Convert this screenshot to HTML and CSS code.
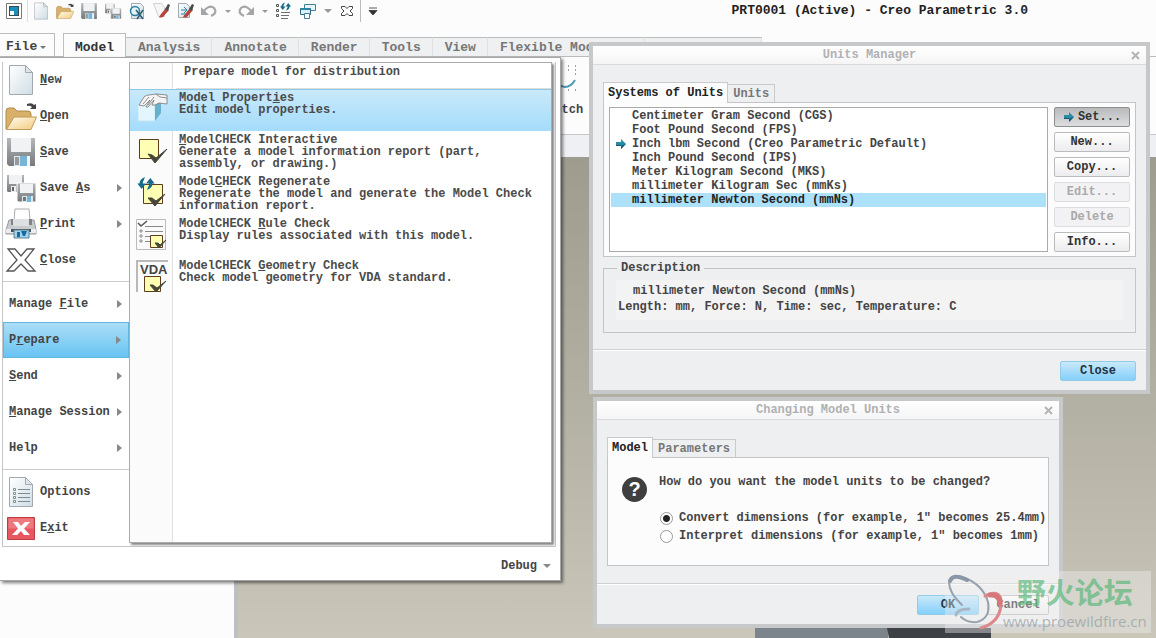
FILE: index.html
```html
<!DOCTYPE html>
<html lang="en">
<head>
  <meta charset="UTF-8">
  <meta name="viewport" content="width=device-width, initial-scale=1.0">
  <title>PRT0001 (Active) - Creo Parametric 3.0</title>
  <link rel="stylesheet" href="styles.css">
</head>
<body>
  <!-- shared icon shapes -->
  <svg class="defs" width="0" height="0" aria-hidden="true">
    <defs>
      <linearGradient id="paper" x1="0" y1="0" x2="1" y2="1"><stop offset="0" stop-color="#fff"/><stop offset="1" stop-color="#cfdde6"/></linearGradient>
      <linearGradient id="gold" x1="0" y1="0" x2="1" y2="1"><stop offset="0" stop-color="#fffdf0"/><stop offset="1" stop-color="#f3c97c"/></linearGradient>
      <linearGradient id="steel" x1="0" y1="0" x2="0" y2="1"><stop offset="0" stop-color="#b4b8bb"/><stop offset="1" stop-color="#77797b"/></linearGradient>
    </defs>
    <symbol id="page" viewBox="0 0 32 32"><path d="M4.500 1.500h16l7 7v22h-23z" fill="url(#paper)" stroke="#a3aaaf"/><path d="M20.500 1.500v7h7z" fill="#dfe6ea" stroke="#a3aaaf"/></symbol>
    <symbol id="folder" viewBox="0 0 32 32"><path d="M1 29V11q0-3 3-3h5l3 3h11q3 0 3 3v6z" fill="#d9b06a" stroke="#b08a48"/><path d="M1.500 29.500L9 17h22.500L26 29.500z" fill="url(#gold)" stroke="#c09a58"/><path d="M22 4q5-2 7 1l2-1v5h-6l2-2q-2-2-5-1z" fill="#444"/></symbol>
    <symbol id="floppy" viewBox="0 0 32 32"><path d="M2 2h28v28H4l-2-2z" fill="url(#steel)"/><path d="M6 2h20v14H6z" fill="#f1f2f3"/><path d="M9 20h16v10H9z" fill="#d5e8f3"/><path d="M10 21h4v8h-4z" fill="#999"/><path d="M15 20h7v10h-7z" fill="#78b4d5"/><path d="M22 20h3v10h-3z" fill="#eef6fa"/></symbol>
    <symbol id="floppies" viewBox="0 0 32 32"><path d="M2 3h17v17H3l-1-1z" fill="url(#steel)"/><path d="M4 3h13v9H4z" fill="#f1f2f3"/><path d="M6 14h5v6H6z" fill="#eee"/><path d="M7 15h2v4H7z" fill="#666"/><path d="M12 11h19v19H13l-1-1z" fill="url(#steel)" stroke="#fff" stroke-width="1"/><path d="M15 12h13v9H15z" fill="#f1f2f3"/><path d="M17 24h11v6H17z" fill="#d5e8f3"/><path d="M18 25h3v4h-3z" fill="#777"/><path d="M22 24h4v6h-4z" fill="#78b4d5"/></symbol>
    <symbol id="note" viewBox="0 0 32 32"><path d="M3.500 5.500h19v19h-19z" fill="#ffffb4" stroke="#5c3d1e"/><path d="M12 20l4 1 4 3 11-9-12 14z" fill="#474739" stroke="#474739"/></symbol>
    <symbol id="arrow" viewBox="0 0 12 12"><path d="M1 4h5V1l5 5-5 5V8H1z" fill="#2b8aa5"/><path d="M1 7h5v4l5-5.500L6 8H1z" fill="#17576e"/></symbol>
    <symbol id="caret" viewBox="0 0 8 6"><path d="M0 1h8L4 5z" fill="currentColor"/></symbol>
    <symbol id="swap" viewBox="0 0 16 12"><path d="M0 6h2q0-4 5-6l-1 3q-1 1-1 3h3l-4 5zM16 6h-2q0 4-5 6l1-3q1-1 1-3H8l4-5z" fill="#176b8a"/></symbol>
    <symbol id="undo" viewBox="0 0 18 18"><path d="M3 10Q9 2 14 6q4 5-3 8" fill="none" stroke="#a3a5a7" stroke-width="2.200"/><path d="M1 5v8h8z" fill="#a3a5a7"/></symbol>
    <symbol id="brush" viewBox="0 0 18 18"><path d="M9 12l5-6 3 2-6 7q-3 1-4 0z" fill="#b4463c"/><path d="M13 7l3-5 2 1-2 6z" fill="#4c4c4c"/></symbol>
  </svg>

  <header class="titlebar">
    <div class="quick-tools">
      <button class="tool" aria-label="Window"><svg width="18" height="18" viewBox="0 0 18 18"><path d="M1.500 1.500h15v15h-15z" fill="#fff" stroke="#777"/><path d="M4 4h10v10H4z" fill="#37484f"/><path d="M5 5h8v8H5z" fill="#178fbd"/><path d="M5 9h4v4H5z" fill="#fff"/></svg></button>
      <span class="divider light"></span>
      <button class="tool" aria-label="New"><svg width="18" height="18"><use href="#page"/></svg></button>
      <button class="tool" aria-label="Open"><svg width="18" height="18"><use href="#folder"/></svg></button>
      <button class="tool" aria-label="Save"><svg width="18" height="18"><use href="#floppy"/></svg></button>
      <button class="tool" aria-label="Save all"><svg width="18" height="18"><use href="#floppies"/></svg></button>
      <button class="tool" aria-label="Preview"><svg width="18" height="18" viewBox="0 0 18 18"><path d="M3.500 1.500h9l3 3v12h-12z" fill="url(#paper)" stroke="#a3aaaf"/><circle cx="7" cy="9" r="4.500" fill="#e2f4fa" stroke="#267f9c" stroke-width="1.500"/><path d="M8 8l7 9M15 8l-6 9" stroke="#2d5c70" stroke-width="1.500"/></svg></button>
      <button class="tool" aria-label="Erase current"><svg width="18" height="18" viewBox="0 0 18 18"><path d="M1.500 1.500h8l3 4v9h-6z" fill="#f3f5f6" stroke="#cdd2d5"/><use href="#brush"/></svg></button>
      <button class="tool" aria-label="Erase not displayed"><svg width="18" height="18" viewBox="0 0 18 18"><path d="M2.500 1.500h8l3 3v11h-11z" fill="url(#paper)" stroke="#a3aaaf"/><path d="M5 8h5M5 12h4M8 5l3 3-3 3" stroke="#2687a7" fill="none"/><use href="#brush"/></svg></button>
      <button class="tool" aria-label="Undo"><svg width="18" height="18"><use href="#undo"/></svg></button>
      <button class="drop" aria-label="Undo list"><svg width="6" height="5"><use href="#caret"/></svg></button>
      <button class="tool" aria-label="Redo"><svg class="flip" width="18" height="18"><use href="#undo"/></svg></button>
      <button class="drop" aria-label="Redo list"><svg width="6" height="5"><use href="#caret"/></svg></button>
      <button class="tool" aria-label="Regenerate"><svg width="18" height="18" viewBox="0 0 18 18"><path d="M2.500 2.500h2v2h-2zM2.500 7.500h2v2h-2zM2.500 12.500h2v2h-2z" fill="#fff" stroke="#555"/><path d="M7 10.500h9M7 13.500h8M7 16.500h7" stroke="#6f6f6f"/><svg x="6" y="0" width="11" height="9"><use href="#swap"/></svg></svg></button>
      <button class="tool wide" aria-label="Windows"><svg width="18" height="18" viewBox="0 0 18 18"><path d="M5.500 2.500h11v6h-11z" fill="#e9f4f9" stroke="#477d95"/><path d="M1.500 6.500h10v6h-10z" fill="#dceff7" stroke="#2d6984"/><path d="M5.500 11.500h5v5h-5z" fill="#fff" stroke="#477d95"/><path d="M2 7h9" stroke="#2586a8" stroke-width="2"/></svg></button>
      <button class="drop" aria-label="Window list"><svg width="8" height="6"><use href="#caret"/></svg></button>
      <button class="tool wide" aria-label="Close window"><svg width="14" height="14" viewBox="0 0 14 14"><path d="M1.500 2.500h3.500l2 2 2-2h3.500v2L10 7l2.500 2.500v2H9l-2-2-2 2H1.500v-2L4 7 1.500 4.500z" fill="#fff" stroke="#444"/></svg></button>
      <span class="divider"></span>
      <button class="tool" aria-label="Customize"><svg width="10" height="9" viewBox="0 0 10 9"><path d="M1 1h8M1 3.500h8L5 8z" fill="#333" stroke="#333" stroke-width=".8"/></svg></button>
    </div>
    <h1 class="window-title">PRT0001 (Active) - Creo Parametric 3.0</h1>
  </header>

  <nav class="ribbon-tabs">
    <button class="file-tab">File<svg width="6" height="5"><use href="#caret"/></svg></button>
    <a class="tab current" href="#">Model</a>
    <a class="tab" href="#">Analysis</a>
    <a class="tab" href="#">Annotate</a>
    <a class="tab" href="#">Render</a>
    <a class="tab" href="#">Tools</a>
    <a class="tab" href="#">View</a>
    <a class="tab" href="#">Flexible Modeling</a>
    <a class="tab" href="#">Applications</a>
  </nav>

  <section class="ribbon">
    <button class="sketch">
      <svg width="40" height="30" viewBox="0 0 40 30"><path d="M12 10q3 12 11 12 6 0 10-7" fill="none" stroke="#4d9bb3" stroke-width="2"/><path d="M26 1h1M33 1h1M26 5h1M33 5h1M26 25h1M33 25h1M33 9h1" stroke="#444"/></svg>
      <span>Sketch</span>
    </button>
  </section>
  <div class="ribbon-labels"></div>

  <main class="workspace">
    <div class="tree"></div>
    <div class="canvas">
      <svg class="model" width="237" height="10"><path d="M0 0h133v10H0z" fill="#7c848c"/><path d="M132 0h104v10H134z" fill="#3e4246"/></svg>
    </div>
  </main>

  <!-- file menu -->
  <div class="file-menu">
    <div class="menu-panes">
      <div class="menu-list">
        <div class="menu-group">
          <button class="menu-item"><svg width="32" height="32"><use href="#page"/></svg><span><u>N</u>ew</span></button>
          <button class="menu-item"><svg width="32" height="32"><use href="#folder"/></svg><span><u>O</u>pen</span></button>
          <button class="menu-item"><svg width="32" height="32"><use href="#floppy"/></svg><span><u>S</u>ave</span></button>
          <button class="menu-item more"><svg width="32" height="32"><use href="#floppies"/></svg><span>Save <u>A</u>s</span></button>
          <button class="menu-item more"><svg width="32" height="32" viewBox="0 0 32 32"><path d="M9 12L10 1h14l1 11z" fill="#fff" stroke="#aaa"/><path d="M4 12h25l2 10v4H1v-4z" fill="#c9cccf" stroke="#96999c"/><path d="M6 11h21v6H6z" fill="#808386"/><path d="M8 11h16v7H8z" fill="#dde0e2"/><path d="M1 21h30v4H1z" fill="#e9ebec"/><path d="M6 21h20v3H6z" fill="#4c5156"/><path d="M9 22h15v8H9z" fill="#9dd4ef" stroke="#5f8292"/><path d="M12 24h3v5h-3zM16 23h6l-2 5h-2z" fill="#176a9b"/></svg><span><u>P</u>rint</span></button>
          <button class="menu-item"><svg width="32" height="32" viewBox="0 0 32 32"><path d="M3 5h7l6 7 6-7h7L20 16l10 11h-7l-7-7-7 7H2l10-11z" fill="#fff" stroke="#555" stroke-width="1.300"/></svg><span><u>C</u>lose</span></button>
        </div>
        <div class="menu-group">
          <button class="menu-item more"><span>Manage <u>F</u>ile</span></button>
          <button class="menu-item more active"><span>P<u>r</u>epare</span></button>
          <button class="menu-item more"><span><u>S</u>end</span></button>
          <button class="menu-item more"><span><u>M</u>anage Session</span></button>
          <button class="menu-item more"><span>Help</span></button>
        </div>
        <div class="menu-group">
          <button class="menu-item"><svg width="32" height="32" viewBox="0 0 32 32"><use href="#page"/><path d="M13 13.500h12M13 17.500h12M13 21.500h12M13 25.500h12" stroke="#7b8b93"/><path d="M8.500 12.500h2v2h-2zM8.500 16.500h2v2h-2zM8.500 20.500h2v2h-2zM8.500 24.500h2v2h-2z" fill="#fff" stroke="#65757d" stroke-width=".8"/></svg><span>Options</span></button>
          <button class="menu-item"><svg width="32" height="32" viewBox="0 0 32 32"><path d="M2.500 5.500h27v22h-27z" fill="#e85660" stroke="#bd3d43"/><path d="M3.500 6.500h25v10h-25z" fill="#ee7a80"/><path d="M8 10h5l3 4 4-4h5l-6 6.500 6 6.500h-6l-3-4-4 4H7l6-6.500z" fill="#fff"/></svg><span>E<u>x</u>it</span></button>
        </div>
      </div>

      <div class="submenu">
        <h2 class="submenu-title">Prepare model for distribution</h2>
        <button class="sub-item active">
          <svg width="32" height="32" viewBox="0 0 32 32"><path d="M2 13l5-5h17l-5 5z" fill="#fff"/><path d="M2 13h17v16H2z" fill="#e4f6fd" stroke="#c3e4f2"/><path d="M19 13l6-5v13l-6 8z" fill="#68b0cd"/><path d="M3 13l5-8q2-2 5-2l7-1 11 1v9l-8-1-4 2-3 0 2-5-6 7h-2l4-7-6 6z" fill="#f4f4f4" stroke="#777" stroke-width=".8"/><path d="M7 12l6-7M12 13l6-8M20 2l4 3 7 1" stroke="#777" stroke-width=".8" fill="none"/></svg>
          <span>Model Propert<u>i</u>es<br>Edit model properties.</span>
        </button>
        <button class="sub-item">
          <svg width="32" height="32"><use href="#note"/></svg>
          <span><u>M</u>odelCHECK Interactive<br>Generate a model information report (part, assembly, or drawing.)</span>
        </button>
        <button class="sub-item">
          <svg width="32" height="32" viewBox="0 0 32 32"><path d="M7.500 8.500h19v19h-19z" fill="#ffffb4" stroke="#5c3d1e"/><path d="M12 22l4 0 4 3 9-7-10 12z" fill="#474739" stroke="#474739"/><svg x="1" y="1" width="18" height="13"><use href="#swap"/></svg></svg>
          <span>Model<u>C</u>HECK Regenerate<br>Regenerate the model and generate the Model Check information report.</span>
        </button>
        <button class="sub-item">
          <svg width="32" height="32" viewBox="0 0 32 32"><path d="M.5 1.500h29v30H.5z" fill="#fafafa" stroke="#bbb"/><path d="M2 5l3 3 6-5" fill="none" stroke="#555" stroke-width="1.500"/><path d="M9 8.500h18M9 13.500h18M9 18.500h6M9 23.500h5" fill="none" stroke="#888"/><path d="M4 12h2v2H4zM4 17h2v2H4zM4 22h2v2H4z" fill="#fff" stroke="#777" stroke-width=".8"/><path d="M14.500 17.500h12v12h-12z" fill="#ffffb4" stroke="#5c3d1e"/><path d="M19 25l3 0 2 2 6-5-7 8z" fill="#474739" stroke="#474739"/></svg>
          <span>ModelCHECK <u>R</u>ule Check<br>Display rules associated with this model.</span>
        </button>
        <button class="sub-item">
          <svg width="32" height="32" viewBox="0 0 32 32"><path d="M1 32V1h31" fill="none" stroke="#b7b9bb" stroke-width="2"/><path d="M8.500 16.500h16v15h-16z" fill="#ffffb4" stroke="#5c3d1e"/><path d="M14 25l3 0 4 3 9-7-10 11z" fill="#474739" stroke="#474739"/><text class="icon-text" x="4" y="14">VDA</text></svg>
          <span>ModelCHECK <u>G</u>eometry Check<br>Check model geometry for VDA standard.</span>
        </button>
      </div>
    </div>
    <button class="debug">Debug<svg width="8" height="6"><use href="#caret"/></svg></button>
  </div>

  <!-- units manager -->
  <section class="dialog units-manager">
    <header class="dialog-title"><h2>Units Manager</h2><button class="dialog-x" aria-label="Close"><svg width="9" height="9" viewBox="0 0 9 9"><path d="M1 1l7 7M8 1L1 8" stroke="#b4b5b7" stroke-width="2"/></svg></button></header>
    <div class="dialog-body">
      <div class="dialog-tabs">
        <button class="dialog-tab current">Systems of Units</button>
        <button class="dialog-tab">Units</button>
      </div>
      <div class="tab-panel systems">
        <ul class="unit-list" role="listbox" aria-label="Systems of Units">
          <li role="option">Centimeter Gram Second (CGS)</li>
          <li role="option">Foot Pound Second (FPS)</li>
          <li role="option"><svg width="12" height="12"><use href="#arrow"/></svg>Inch lbm Second (Creo Parametric Default)</li>
          <li role="option">Inch Pound Second (IPS)</li>
          <li role="option">Meter Kilogram Second (MKS)</li>
          <li role="option">millimeter Kilogram Sec (mmKs)</li>
          <li role="option" class="selected" aria-selected="true">millimeter Newton Second (mmNs)</li>
        </ul>
        <div class="side-buttons">
          <button class="btn pressed"><svg width="12" height="12"><use href="#arrow"/></svg>Set...</button>
          <button class="btn">New...</button>
          <button class="btn">Copy...</button>
          <button class="btn" disabled>Edit...</button>
          <button class="btn" disabled>Delete</button>
          <button class="btn">Info...</button>
        </div>
      </div>
      <fieldset class="description">
        <legend>Description</legend>
        <div class="description-text">
          <p class="unit-name">millimeter Newton Second (mmNs)</p>
          <p>Length: mm, Force: N, Time: sec, Temperature: C</p>
        </div>
      </fieldset>
    </div>
    <footer class="dialog-footer"><button class="btn primary">Close</button></footer>
  </section>

  <!-- changing model units -->
  <section class="dialog change-units">
    <header class="dialog-title"><h2>Changing Model Units</h2><button class="dialog-x" aria-label="Close"><svg width="9" height="9" viewBox="0 0 9 9"><path d="M1 1l7 7M8 1L1 8" stroke="#b4b5b7" stroke-width="2"/></svg></button></header>
    <div class="dialog-body">
      <div class="dialog-tabs">
        <button class="dialog-tab current">Model</button>
        <button class="dialog-tab">Parameters</button>
      </div>
      <div class="tab-panel question">
        <span class="question-mark">?</span>
        <div class="question-text">
          <p>How do you want the model units to be changed?</p>
          <label><input type="radio" name="convert" checked>Convert dimensions (for example, 1″ becomes 25.4mm)</label>
          <label><input type="radio" name="convert">Interpret dimensions (for example, 1″ becomes 1mm)</label>
        </div>
      </div>
    </div>
    <footer class="dialog-footer"><button class="btn primary">OK</button><button class="btn">Cancel</button></footer>
  </section>

  <div class="watermark">
    <svg width="60" height="60" viewBox="0 0 60 60" fill="none" stroke-linecap="round"><path d="M16 46Q22 52 32 51 46 47 43 31 38 14 20 7 6 2 4 11 4 22 17 34" stroke="#98a3b0" stroke-width="2"/><path d="M5 10Q8 2 22 9" stroke="#8997a7" stroke-width="4"/><path d="M24 38q-12 0-13 6" stroke="#a9b6c3" stroke-width="3"/><path d="M40 25q14-7 16 4 1 22-20 28" stroke="#dd888b" stroke-width="3"/><path d="M45 24q9-1 10 8" stroke="#d5777b" stroke-width="5"/></svg>
    <div class="watermark-text">
      <strong lang="zh">野火论坛</strong>
      <span>www.proewildfire.cn</span>
    </div>
  </div>
</body>
</html>
```
FILE: styles.css
```css
* {
  box-sizing: border-box;
}

body {
  margin: 0;
  height: 100vh;
  display: flex;
  flex-direction: column;
  overflow: hidden;
  position: relative;
  background: #fcfcfc;
  color: #444;
  font: bold 12px/14px "Liberation Mono", "Noto Sans CJK SC", monospace;
}

h1, h2, p, ul {
  margin: 0;
  padding: 0;
  font: inherit;
}

button {
  margin: 0;
  padding: 0;
  border: none;
  background: none;
  color: inherit;
  font: inherit;
}

svg {
  flex: none;
}

.defs {
  position: absolute;
}

/* title bar */
.titlebar {
  display: flex;
  align-items: flex-start;
  height: 33px;
  flex: none;
}

.quick-tools {
  display: flex;
  align-items: center;
  height: 22px;
  padding-left: 2px;
  color: #999;
}

.tool, .drop {
  display: flex;
  align-items: center;
  justify-content: center;
  width: 24px;
  height: 22px;
}

.tool.wide {
  width: 26px;
}

.drop {
  width: 13px;
}

.flip {
  transform: scaleX(-1);
}

.divider {
  width: 1px;
  height: 22px;
  background: #bbb;
}

.divider.light {
  margin: 0 1px;
  background: #ddd;
}

.window-title {
  margin: 0 128px 0 auto;
  font-size: 13px;
  line-height: 22px;
  color: #222;
}

/* ribbon */
.ribbon-tabs {
  display: flex;
  align-items: flex-end;
  flex: none;
  height: 24px;
  border-bottom: 1px solid #b9bbbd;
  font-size: 13px;
}

.file-tab {
  display: flex;
  align-items: center;
  gap: 3px;
  width: 55px;
  height: 23px;
  margin-right: 8px;
  padding: 4px 0 0 6px;
  border: 1px solid #bcbec0;
  border-width: 1px 1px 0 0;
}

.file-tab svg {
  color: #777;
}

.tab {
  height: 19px;
  padding: 0 11px 0 12px;
  border-top: 1px solid #bcbec0;
  border-right: 1px solid #dfe1e3;
  background: #eef0f2;
  color: #777;
  line-height: 19px;
  text-decoration: none;
}

.tab.current {
  height: 24px;
  margin-bottom: -1px;
  padding: 4px 11px 0;
  border: 1px solid #bcbec0;
  border-bottom: none;
  background: #fcfcfc;
  color: #333;
}

.ribbon {
  flex: none;
  height: 78px;
  padding-left: 540px;
  border-bottom: 1px solid #c5c7c9;
}

.sketch {
  display: flex;
  flex-direction: column;
  align-items: center;
  gap: 8px;
  padding-top: 8px;
}

.ribbon-labels {
  flex: none;
  height: 22px;
  background: #eff0f3;
}

.workspace {
  flex: 1;
  display: flex;
  min-height: 0;
}

.tree {
  width: 238px;
  border-right: 4px solid #bdbfc2;
  background: #fcfcfc;
}

.canvas {
  flex: 1;
  display: flex;
  align-items: flex-end;
  background: linear-gradient(#9d9c8e, #b2b0a2 50%, #cac6ba);
}

.model {
  margin-left: 517px;
}

/* file menu */
.file-menu {
  position: absolute;
  top: 57px;
  left: 0;
  width: 561px;
  padding: 4px 4px 0 2px;
  border: 1px solid #a5a7a9;
  border-left: none;
  background: #fff;
  box-shadow: 2px 2px 3px rgba(0, 0, 0, 0.5);
}

.menu-panes {
  display: flex;
  padding-right: 3px;
  border: 1px solid #c3c6c9;
  border-top: none;
}

.menu-list {
  width: 126px;
}

.menu-group + .menu-group {
  margin-top: 3px;
  padding-top: 4px;
  border-top: 1px solid #ccc;
}

.menu-item {
  display: flex;
  align-items: center;
  width: 100%;
  height: 36px;
  padding-left: 6px;
}

.menu-item svg {
  margin: 0 3px 0 -4px;
}

.more::after {
  content: "";
  margin: 0 7px 0 auto;
  border: 4px solid transparent;
  border-left: 5px solid #888;
  border-right: none;
}

.menu-item.active {
  border: 1px solid #63b6dc;
  padding-left: 5px;
  background: linear-gradient(#abddf7, #68c4f2);
}

.submenu {
  flex: 1;
  margin-bottom: 3px;
  border: 1px solid #a9abad;
  background: linear-gradient(to right, #fbfbfb 42px, #e2e2e2 42px, #e2e2e2 43px, #fff 43px);
  box-shadow: 2px 2px 2px #888;
  line-height: 12px;
  color: #4b4b4b;
}

.submenu-title {
  height: 26px;
  margin-left: 46px;
  padding: 3px 0 0 8px;
  border-bottom: 1px solid #ddd;
}

.sub-item {
  display: flex;
  align-items: flex-start;
  gap: 11px;
  width: 100%;
  height: 42px;
  padding: 3px 8px 0 6px;
  text-align: left;
}

.sub-item.active {
  border-top: 1px solid #8cc9e5;
  padding-top: 2px;
  background: linear-gradient(#c9e9fb, #a4dcfb);
}

.icon-text {
  font: bold 13px "Liberation Sans", sans-serif;
  fill: #444;
}

.debug {
  display: flex;
  align-items: center;
  gap: 6px;
  height: 33px;
  margin-left: auto;
  padding: 5px 5px 0 0;
}

.debug svg {
  color: #888;
}

/* dialogs */
.dialog {
  position: absolute;
  display: flex;
  flex-direction: column;
  border: 4px solid #c7c8ca;
  background: #eeeff1;
}

.units-manager {
  top: 42px;
  left: 589px;
  width: 561px;
  height: 352px;
}

.change-units {
  top: 397px;
  left: 593px;
  width: 470px;
  height: 231px;
}

.dialog-title {
  display: flex;
  align-items: center;
  height: 19px;
  padding: 0 6px 0 15px;
  border-bottom: 1px solid #d9dadc;
  background: linear-gradient(#fff, #f5f5f6);
  color: #b0b1b3;
}

.dialog-title h2 {
  flex: 1;
  text-align: center;
}

.dialog-x {
  display: flex;
}

.dialog-body {
  flex: 1;
  padding: 17px 10px 0;
}

.dialog-tabs {
  display: flex;
  align-items: flex-end;
}

.dialog-tab {
  height: 18px;
  padding: 0 5px;
  border: 1px solid #c9cacc;
  border-width: 1px 1px 0 0;
  color: #777;
}

.dialog-tab.current {
  height: 21px;
  margin-bottom: -1px;
  padding: 0 4px;
  border-left-width: 1px;
  background: #fcfcfc;
  color: #222;
  z-index: 1;
}

.tab-panel {
  border: 1px solid #c3c4c6;
  background: #fcfcfc;
}

.systems {
  display: flex;
  gap: 6px;
  padding: 4px 5px;
}

.unit-list {
  flex: 1;
  padding: 1px;
  border: 1px solid #aaa;
  background: #fff;
  list-style: none;
}

.unit-list li {
  display: flex;
  align-items: center;
  height: 14px;
  padding-left: 21px;
}

.unit-list svg {
  margin: 0 5px 0 -17px;
}

.unit-list .selected {
  background: #ade1f9;
  color: #222;
}

.side-buttons {
  display: flex;
  flex-direction: column;
  gap: 5px;
  width: 76px;
}

.btn {
  display: flex;
  align-items: center;
  justify-content: center;
  gap: 3px;
  height: 20px;
  border: 1px solid #babbbd;
  border-radius: 2px;
  background: linear-gradient(#fff, #ececee);
  color: #333;
}

.btn:disabled {
  border-color: #dcdddf;
  background: #f2f2f4;
  color: #aaa;
}

.btn.pressed {
  border-color: #8d8e90;
  background: linear-gradient(#b9babc, #dcdddf);
}

.btn.primary {
  border-color: #93cbe7;
  background: linear-gradient(#c8e9fb, #84cffa);
  color: #234;
}

.description {
  margin: 4px 0 0;
  padding: 5px 12px 12px;
  border: 1px solid #c3c4c6;
}

.description legend {
  margin-left: 1px;
  padding: 0 4px;
}

.description-text {
  padding: 3px 2px 5px;
  background: #f3f3f4;
  line-height: 16px;
}

.unit-name {
  padding-left: 15px;
}

.dialog-footer {
  display: flex;
  justify-content: flex-end;
  gap: 8px;
  padding: 11px 10px 9px;
  border-top: 1px solid #cfd0d2;
  box-shadow: inset 0 1px #fff;
}

.units-manager .btn.primary {
  width: 76px;
}

.change-units .dialog-footer .btn {
  width: 62px;
}

.question {
  display: flex;
  gap: 12px;
  height: 109px;
  padding: 17px 0 0 14px;
}

.question-mark {
  width: 25px;
  height: 25px;
  margin-top: 2px;
  border-radius: 50%;
  background: #3f3f3f;
  color: #fff;
  font: bold 20px/25px "Liberation Sans", sans-serif;
  text-align: center;
}

.question-text {
  white-space: nowrap;
}

.question-text p {
  margin-bottom: 20px;
}

.question-text label {
  display: flex;
  align-items: center;
  gap: 6px;
  height: 18px;
}

.question-text input {
  appearance: none;
  width: 13px;
  height: 13px;
  margin: 0 0 0 1px;
  border: 1px solid #999;
  border-radius: 50%;
  background: #fff;
}

.question-text input:checked {
  background: radial-gradient(circle, #222 3px, #fff 4px);
}

/* forum mark over the lower right corner */
.watermark {
  position: absolute;
  right: 5px;
  bottom: 5px;
  display: flex;
  width: 206px;
  height: 62px;
  background: rgba(240, 240, 240, 0.4);
}

.watermark-text {
  display: flex;
  flex-direction: column;
  align-items: center;
  margin-left: -2px;
  color: rgba(150, 160, 165, 0.75);
  font: 15px/20px "Open Sans", sans-serif;
}

.watermark strong {
  color: rgba(80, 180, 115, 0.65);
  font: bold 29px/40px "Noto Sans CJK SC", sans-serif;
}
```
